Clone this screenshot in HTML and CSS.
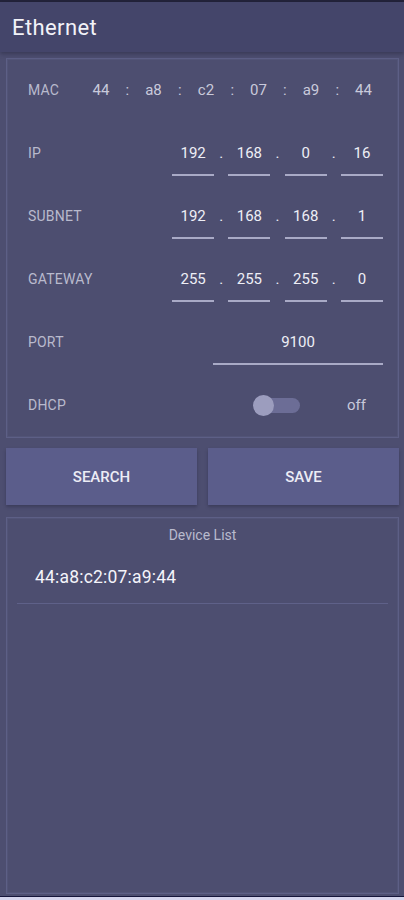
FILE: index.html
```html
<!DOCTYPE html>
<html lang="en">
<head>
<meta charset="utf-8">
<title>Ethernet</title>
<link rel="stylesheet" href="styles.css">
</head>
<body>
<div class="page">
  <header class="appbar"><h1 class="title">Ethernet</h1></header>

  <section class="panel settings">
    <div class="row">
      <span class="label">MAC</span>
      <div class="mac">
        <span class="mcell">44</span><span class="msep">:</span>
        <span class="mcell">a8</span><span class="msep">:</span>
        <span class="mcell">c2</span><span class="msep">:</span>
        <span class="mcell">07</span><span class="msep">:</span>
        <span class="mcell">a9</span><span class="msep">:</span>
        <span class="mcell">44</span>
      </div>
    </div>
    <div class="row">
      <span class="label">IP</span>
      <div class="ip">
        <span class="seg">192</span><span class="dot">.</span>
        <span class="seg">168</span><span class="dot">.</span>
        <span class="seg">0</span><span class="dot">.</span>
        <span class="seg">16</span>
      </div>
    </div>
    <div class="row">
      <span class="label">SUBNET</span>
      <div class="ip">
        <span class="seg">192</span><span class="dot">.</span>
        <span class="seg">168</span><span class="dot">.</span>
        <span class="seg">168</span><span class="dot">.</span>
        <span class="seg">1</span>
      </div>
    </div>
    <div class="row">
      <span class="label">GATEWAY</span>
      <div class="ip">
        <span class="seg">255</span><span class="dot">.</span>
        <span class="seg">255</span><span class="dot">.</span>
        <span class="seg">255</span><span class="dot">.</span>
        <span class="seg">0</span>
      </div>
    </div>
    <div class="row">
      <span class="label">PORT</span>
      <div class="ip"><span class="seg port">9100</span></div>
    </div>
    <div class="row">
      <span class="label">DHCP</span>
      <div class="dhcp">
        <span class="switch"><span class="knob"></span></span>
        <span class="state">off</span>
      </div>
    </div>
  </section>

  <div class="actions">
    <button class="btn">SEARCH</button>
    <button class="btn">SAVE</button>
  </div>

  <section class="panel devices">
    <div class="dtitle">Device List</div>
    <ul class="dlist">
      <li class="ditem">44:a8:c2:07:a9:44</li>
    </ul>
  </section>

  <div class="navline"></div>
</div>
</body>
</html>
```

FILE: styles.css
```css
* { box-sizing: border-box; }
html, body { margin: 0; padding: 0; }
body {
  background: #4d4e70;
  font-family: Roboto, "Noto Sans", "Liberation Sans", sans-serif;
  color: #dcdcea;
}
.page {
  width: 404px;
  height: 900px;
  display: flex;
  flex-direction: column;
  border-top: 2px solid #23233a;
}
.appbar {
  height: 50px;
  background: #44456a;
  display: flex;
  align-items: center;
  padding-left: 12px;
  box-shadow: 0 2px 4px rgba(20, 20, 40, 0.35);
  position: relative;
  z-index: 1;
}
.title {
  margin: 0;
  font-size: 22px;
  font-weight: 400;
  letter-spacing: 0.4px;
  color: #f2f2f8;
  padding-top: 1px;
}
.panel {
  margin: 0 5px 0 6px;
  border: 1px solid #5d5f86;
  box-shadow: inset 0 0 0 1px #525477;
}
.settings {
  margin-top: 6px;
  height: 380px;
}
.row {
  height: 63px;
  padding: 21px 15px 0 21px;
  display: flex;
  align-items: flex-start;
  justify-content: space-between;
  line-height: 20px;
}
.label {
  font-size: 14px;
  letter-spacing: 0.2px;
  color: #b9bacd;
}
.mac {
  display: flex;
  margin-right: 2px;
  font-size: 15px;
  color: #c9cadb;
}
.mcell { width: 35px; text-align: center; }
.msep { width: 17.5px; text-align: center; }
.ip {
  display: flex;
  font-size: 15px;
  color: #eeeef6;
}
.seg {
  width: 42px;
  text-align: center;
  padding-bottom: 11px;
  border-bottom: 2px solid #a9aac6;
  height: 33px;
}
.seg.port { width: 170px; }
.dot {
  width: 14.3px;
  text-align: center;
}
.dhcp {
  display: flex;
  align-items: center;
  height: 20px;
  padding-right: 17px;
}
.switch {
  width: 46px;
  height: 15px;
  border-radius: 8px;
  background: #6c6d96;
  position: relative;
  margin-right: 47px;
}
.knob {
  position: absolute;
  left: -1px;
  top: -3px;
  width: 21px;
  height: 21px;
  border-radius: 50%;
  background: #9c9dbe;
}
.state {
  font-size: 15px;
  color: #c8c9db;
}
.actions {
  margin: 10px 5px 0 6px;
  display: flex;
  gap: 11px;
}
.btn {
  flex: 1;
  height: 57px;
  border: 0;
  border-radius: 0;
  background: #5b5d8b;
  color: #ececf5;
  font-family: inherit;
  font-size: 15px;
  font-weight: 500;
  box-shadow: 0 2px 3px rgba(30, 30, 55, 0.35);
  padding: 0;
}
.devices {
  margin-top: 12px;
  height: 377px;
}
.dtitle {
  text-align: center;
  font-size: 14px;
  color: #b9bacd;
  line-height: 20px;
  padding: 7px 0 6px;
}
.dlist {
  list-style: none;
  margin: 0 10px;
  padding: 0;
}
.ditem {
  height: 53px;
  display: flex;
  align-items: center;
  padding: 0 0 1px 18px;
  font-size: 17.5px;
  letter-spacing: 0.2px;
  color: #f4f4fa;
  border-bottom: 1px solid #5f6189;
}
.navline {
  margin-top: auto;
  height: 4px;
  border-top: 1px solid #15153a;
  background: #d4d4ec;
}
```
